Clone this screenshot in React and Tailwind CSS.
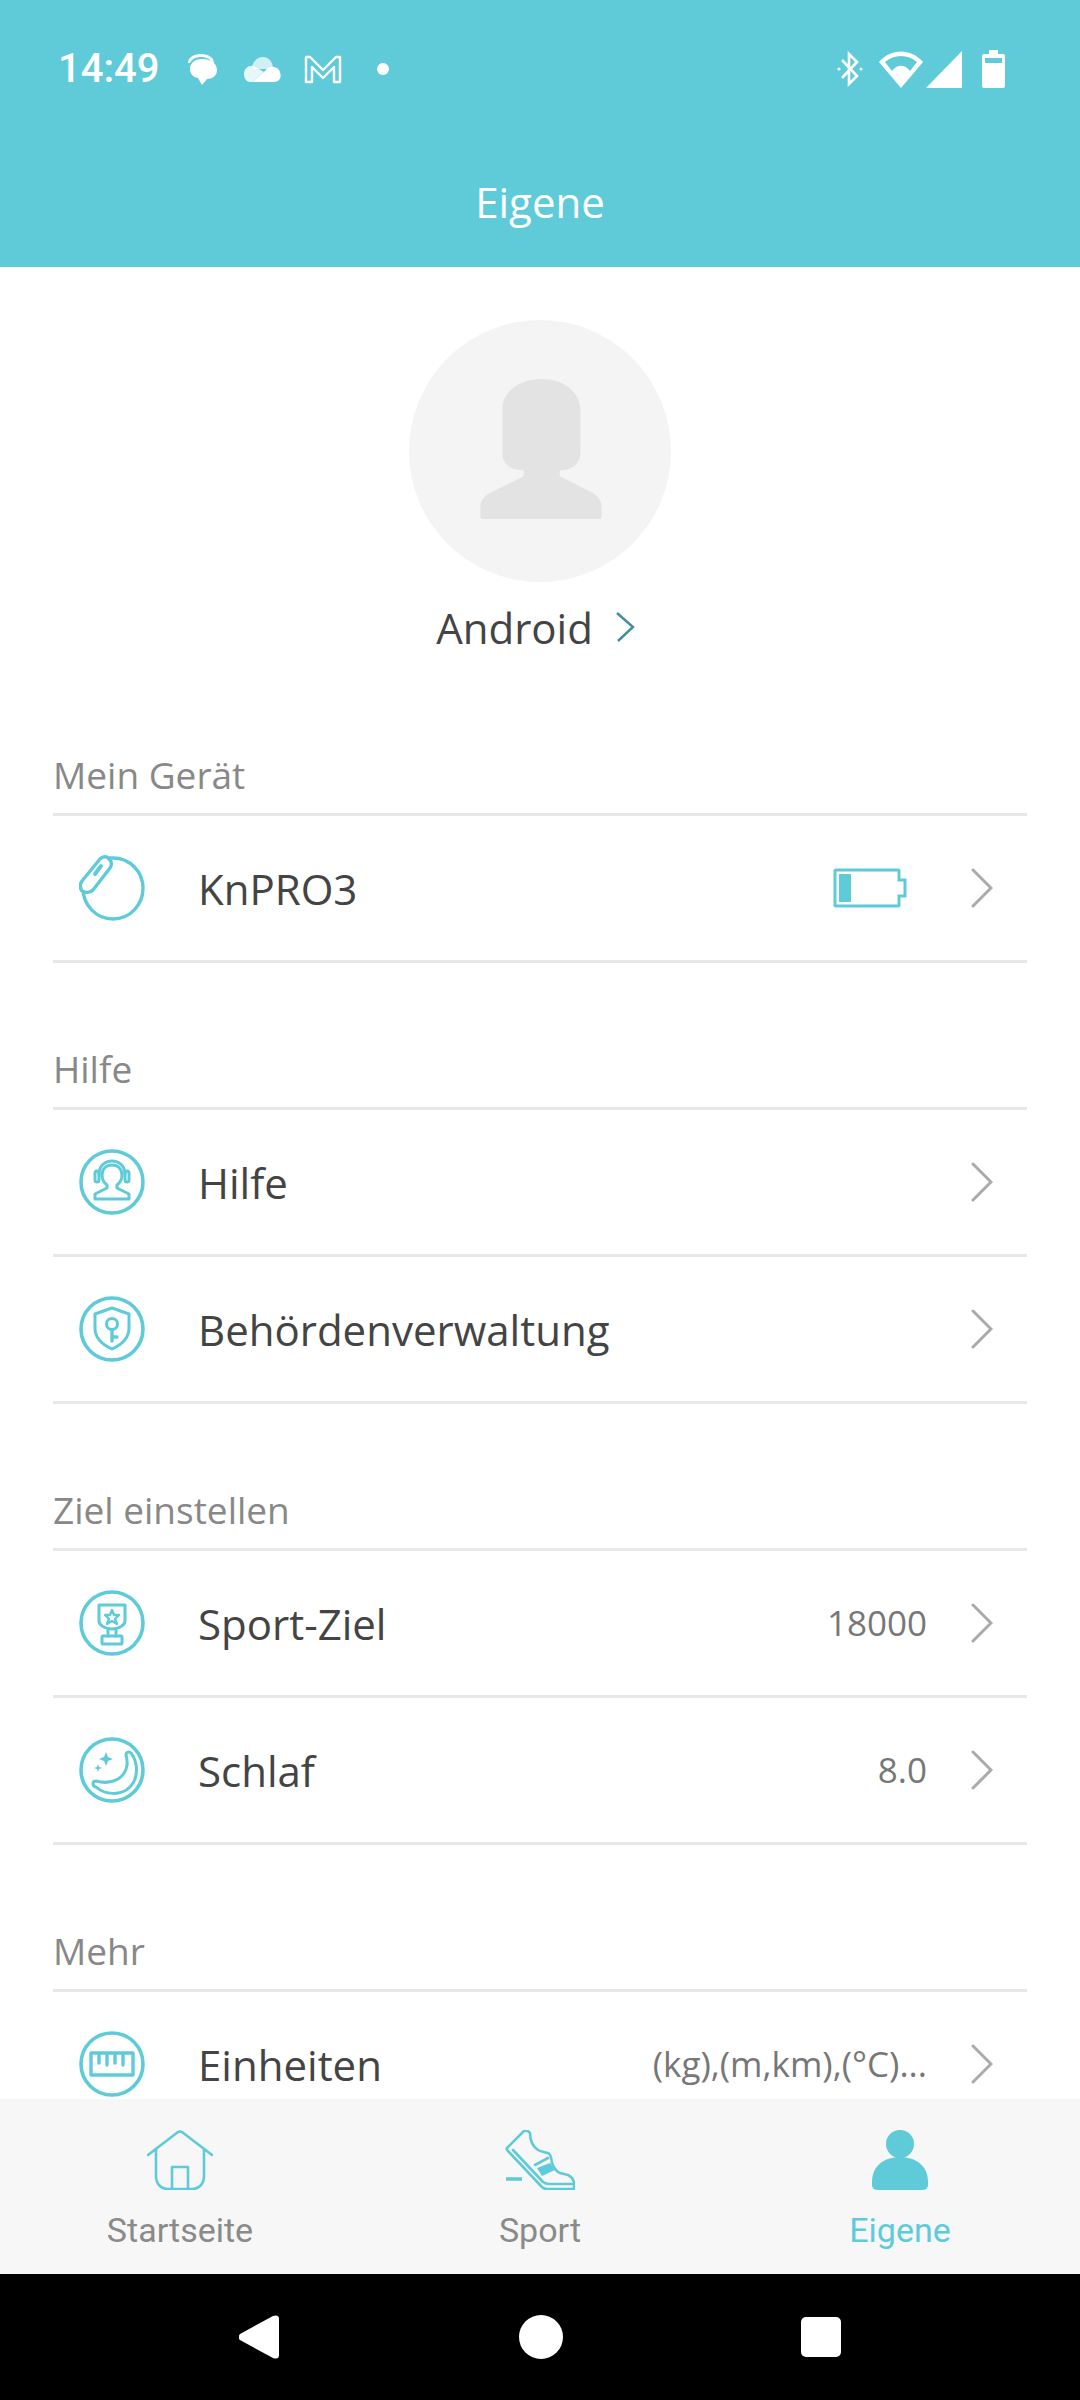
import React from "react";

const TEAL = "#5fcbd9";

const Chevron = () => (
    <svg width="22" height="40" viewBox="0 0 22 40" fill="none" className="shrink-0">
        <path d="M2 2 L20 20 L2 38" stroke="#aaaaaa" strokeWidth="3" strokeLinecap="round" strokeLinejoin="miter" />
    </svg>
);

// row icons, all drawn on a 66px box
const IconShell = ({ children }) => (
    <svg width="66" height="66" viewBox="0 0 66 66" fill="none" stroke={TEAL} strokeWidth="3" strokeLinejoin="round" strokeLinecap="round">
        {children}
    </svg>
);

const WatchIcon = () => (
    <IconShell>
        <path d="M4 33 C4 50 17 64 34 64 C51 64 64 50 64 33 C64 17 51 3 34 3 L29 3" strokeWidth="3.4" />
        <path d="M3 26 L21 4 C24 1 28 1 30 4 C33 6 33 10 31 13 L14 35 C11 38 6 38 3 36 C1 33 1 29 3 26 Z" fill="#ffffff" strokeWidth="3.4" />
        <path d="M16 19 L22 11" strokeWidth="4" />
    </IconShell>
);

const HeadsetIcon = () => (
    <IconShell>
        <circle cx="33" cy="33" r="31" strokeWidth="3.6" />
        <path d="M16 50 V45 L28 39 V36 C24 33 23 29 23 26 C23 20 27 16 33 16 C39 16 43 20 43 26 C43 29 42 33 38 36 V39 L50 45 V50 Z" />
        <path d="M20 25 C20 17 26 12 33 12 C40 12 46 17 46 25" />
        <rect x="16" y="22" width="4" height="11" rx="2" />
        <rect x="46" y="22" width="4" height="11" rx="2" />
    </IconShell>
);

const ShieldIcon = () => (
    <IconShell>
        <circle cx="33" cy="33" r="31" strokeWidth="3.6" />
        <path d="M33 12 L50 18 V32 C50 42 42 49 33 53 C24 49 16 42 16 32 V18 Z" />
        <circle cx="33" cy="28" r="5.5" />
        <path d="M33 34 V45 M33 41 H38" strokeWidth="3.4" />
    </IconShell>
);

const TrophyIcon = () => (
    <IconShell>
        <circle cx="33" cy="33" r="31" strokeWidth="3.6" />
        <path d="M20 15 H46 V31 C46 35 40 39 33 39 C26 39 20 35 20 31 Z" />
        <path d="M29 39 V46 M37 39 V46" />
        <rect x="23" y="46" width="20" height="8" rx="1" />
        <path d="M33 20 L35 25 L40 25 L36 29 L38 34 L33 31 L28 34 L30 29 L26 25 L31 25 Z" strokeWidth="2.4" />
    </IconShell>
);

const MoonIcon = () => (
    <IconShell>
        <circle cx="33" cy="33" r="31" strokeWidth="3.6" />
        <path d="M47 18 C50 28 47 37 39 42 C32 46 24 46 17 44 C13 44 13 49 17 50 C26 58 42 59 51 50 C60 41 59 25 52 16 C50 14 47 15 47 18 Z" />
        <path d="M27 15 L29 20 L34 22 L29 24 L27 29 L25 24 L20 22 L25 20 Z" fill={TEAL} stroke="none" />
        <path d="M19 27 L20 30 L23 31 L20 32 L19 35 L18 32 L15 31 L18 30 Z" fill={TEAL} stroke="none" />
    </IconShell>
);

const RulerIcon = () => (
    <IconShell>
        <circle cx="33" cy="33" r="31" strokeWidth="3.6" />
        <rect x="12" y="22" width="42" height="22" strokeWidth="3.4" />
        <path d="M20 24 V32 M28 24 V34 M36 24 V32 M44 24 V34" strokeWidth="3.4" />
    </IconShell>
);

const BatteryIcon = () => (
    <svg width="74" height="40" viewBox="0 0 74 40" fill="none">
        <path d="M2 3 Q2 2 3 2 H65 Q66 2 66 3 V12 H72 V28 H66 V37 Q66 38 65 38 H3 Q2 38 2 37 Z" stroke={TEAL} strokeWidth="3" />
        <rect x="6" y="6" width="12" height="28" fill={TEAL} />
    </svg>
);

const Row = ({ icon, label, value, extra }) => (
    <div className="h-[147px] flex items-center border-b-[3px] border-[#e8e8e8]">
        <div className="w-[145px] pl-[26px] shrink-0 flex items-center">{icon}</div>
        <span className="flex-1 text-[42px] text-[#444444]">{label}</span>
        {value && <span className="text-[35px] text-[#777777] mr-[44px]">{value}</span>}
        {extra && <span className="flex mr-[64px]">{extra}</span>}
        <span className="mr-[34px] flex"><Chevron /></span>
    </div>
);

const Section = ({ title, children }) => (
    <section className="mx-[53px]">
        <div className="h-[62px] flex items-center border-b-[3px] border-[#e8e8e8] text-[37px] text-[#888888] pb-[18px]">{title}</div>
        {children}
    </section>
);

const App = () => {
    return (
        <div className="w-[1080px] h-[2400px] flex flex-col bg-white overflow-hidden font-['Open_Sans',sans-serif]">
            {/* status bar + title */}
            <header className="h-[267px] shrink-0 bg-[#5fcbd9] text-white flex flex-col">
                <div className="h-[50px] mt-[44px] pl-[58px] pr-[75px] flex items-center">
                    <span className="text-[40px] font-medium font-['Roboto',sans-serif] w-[127px]">14:49</span>
                    <svg width="32" height="32" viewBox="0 0 32 32" fill="white" className="mr-[27px]">
                        <path d="M3 10 C3 5 8 1 16 1 C24 1 29 5 29 10 L27 10 C25 6 21 4 16 4 C11 4 7 6 5 10 Z" />
                        <path d="M5 16 C5 10 10 6 17 6 C25 6 32 10 32 17 C32 23 27 26 22 26 L17 32 L13 25 C8 24 5 21 5 16 Z" />
                    </svg>
                    <svg width="37" height="25" viewBox="0 0 37 25" fill="white" className="mr-[23px]">
                        <path opacity="0.7" d="M8 12 C8 5 13 0 19 0 C25 0 29 5 29 12 Z" />
                        <path opacity="0.85" d="M0 17 C0 11 5 8 10 9 L20 15 L9 25 L6 25 C2 25 0 21 0 17 Z" />
                        <path d="M9 25 L21 14 C24 9 31 8 35 13 C38 18 37 25 30 25 Z" />
                    </svg>
                    <svg width="38" height="29" viewBox="0 0 38 29" fill="none" stroke="white" strokeWidth="2.4" strokeLinejoin="round" className="mr-[35px]">
                        <path d="M2 2 H6 L19 15 L32 2 H36 V27 H30 V12 L19 23 L8 12 V27 H2 Z" />
                    </svg>
                    <span className="w-[12px] h-[12px] rounded-full bg-white"></span>
                    <span className="flex-1"></span>
                    <svg width="28" height="36" viewBox="0 0 28 36" fill="none" stroke="white" strokeWidth="2.6" className="mr-[15px]">
                        <path d="M6 9 L21 25 L13 33 V3 L21 11 L6 27" />
                        <circle cx="3" cy="18" r="1.6" fill="white" stroke="none" />
                        <circle cx="25" cy="18" r="1.6" fill="white" stroke="none" />
                    </svg>
                    <svg width="44" height="37" viewBox="0 0 44 37" fill="white" className="mr-[3px]">
                        <path fillRule="evenodd" d="M0 11 C12 -3 32 -3 44 11 L22 37 Z M6 11 C15 3 29 3 38 11 L31 20 C26 13 18 13 13 20 Z" />
                    </svg>
                    <svg width="36" height="37" viewBox="0 0 36 37" fill="white" className="mr-[20px]">
                        <path d="M36 0 V37 H0 Z" />
                    </svg>
                    <svg width="23" height="38" viewBox="0 0 23 38" fill="white">
                        <path fillRule="evenodd" d="M7 0 H16 V4 H21 Q23 4 23 6 V36 Q23 38 21 38 H2 Q0 38 0 36 V6 Q0 4 2 4 H7 Z M3 8 V13 H20 V8 Z" />
                    </svg>
                </div>
                <div className="flex-1 flex items-center justify-center text-[42px] pt-[42px]">Eigene</div>
            </header>

            {/* scrolling content, cut by the tab bar */}
            <main className="flex-1 min-h-0 overflow-hidden">
                <div className="flex flex-col items-center pt-[53px]">
                    <div className="w-[262px] h-[262px] rounded-full bg-[#f4f4f4] flex items-center justify-center">
                        <svg width="122" height="140" viewBox="302 238 364 420" fill="#e3e3e3" className="mb-[4px] ml-[2px]">
                            <path d="M368 330 C368 275 420 238 485 238 C550 238 602 275 602 330 V460 C602 495 575 512 540 512 V530 L640 580 C655 590 666 605 666 620 V650 Q666 658 658 658 H310 Q302 658 302 650 V620 C302 605 312 590 330 580 L432 530 V512 C395 512 368 495 368 460 Z" />
                        </svg>
                    </div>
                    <div className="mt-[15px] mr-[9px] h-[60px] flex items-center gap-[22px]">
                        <span className="text-[42px] text-[#444444]">Android</span>
                        <svg width="20" height="32" viewBox="0 0 20 32" fill="none">
                            <path d="M2 2 L18 16 L3 30" stroke="#3f8f9b" strokeWidth="2.4" />
                        </svg>
                    </div>
                </div>

                <div className="mt-[97px] flex flex-col gap-[85px]">
                    <Section title="Mein Gerät">
                        <Row icon={<WatchIcon />} label="KnPRO3" extra={<BatteryIcon />} />
                    </Section>
                    <Section title="Hilfe">
                        <Row icon={<HeadsetIcon />} label="Hilfe" />
                        <Row icon={<ShieldIcon />} label="Behördenverwaltung" />
                    </Section>
                    <Section title="Ziel einstellen">
                        <Row icon={<TrophyIcon />} label="Sport-Ziel" value="18000" />
                        <Row icon={<MoonIcon />} label="Schlaf" value="8.0" />
                    </Section>
                    <Section title="Mehr">
                        <Row icon={<RulerIcon />} label="Einheiten" value="(kg),(m,km),(°C)..." />
                    </Section>
                </div>
            </main>

            {/* tab bar */}
            <nav className="h-[175px] shrink-0 bg-[#f7f7f7] grid grid-cols-3 font-['Roboto',sans-serif] text-[34px] text-[#8a8a8a]">
                <div className="flex flex-col items-center pt-[31px]">
                    <svg width="66" height="60" viewBox="0 0 66 60" fill="none" stroke={TEAL} strokeWidth="2.6" strokeLinecap="round" strokeLinejoin="round">
                        <path d="M1 25 L31 2 Q33 1 35 2 L65 25" />
                        <path d="M9 19 V46 C9 54 14 59 21 59 H45 C52 59 57 54 57 46 V19" />
                        <path d="M25 59 V37 H41 V59" />
                    </svg>
                    <span className="mt-[15px]">Startseite</span>
                </div>
                <div className="flex flex-col items-center pt-[31px]">
                    <svg width="70" height="60" viewBox="0 0 70 60" fill="none" stroke={TEAL} strokeWidth="2.6" strokeLinejoin="round" strokeLinecap="round">
                        <path d="M2 18 L19 1 Q23 0 25 3 C25 10 27 16 33 20 C36 22 40 22 43 23 Q46 24 47 33 C49 38 52 42 55 43 L63 45 Q69 48 69 54 V59 H42 Q38 59 36 56 L3 21 Q1 19 2 18 Z" />
                        <path d="M8 20 L38 52 Q41 54 44 54 H68" />
                        <path d="M30 35 L43 28" />
                        <path d="M32 38 L45 33 L50 40 L37 46 Z" fill={TEAL} stroke="none" />
                        <path d="M1 49 H17" strokeWidth="3.6" strokeLinecap="butt" />
                    </svg>
                    <span className="mt-[15px]">Sport</span>
                </div>
                <div className="flex flex-col items-center pt-[31px] text-[#5fcbd9]">
                    <svg width="56" height="60" viewBox="0 0 56 60" fill={TEAL}>
                        <ellipse cx="28" cy="14" rx="14" ry="14" />
                        <path d="M0 52 C0 36 12 27 28 27 C44 27 56 36 56 52 V55 Q56 60 50 60 H6 Q0 60 0 55 Z" />
                    </svg>
                    <span className="mt-[15px]">Eigene</span>
                </div>
            </nav>

            {/* android navigation */}
            <div className="h-[126px] shrink-0 bg-black flex items-center justify-center">
                <svg width="40" height="44" viewBox="0 0 40 44" fill="white" className="mr-[240px]">
                    <path d="M1 19 L34 1 Q40 -1 40 4 V40 Q40 45 34 43 L1 25 Q-2 22 1 19 Z" />
                </svg>
                <span className="w-[44px] h-[44px] rounded-full bg-white"></span>
                <span className="w-[40px] h-[40px] rounded-[5px] bg-white ml-[238px]"></span>
            </div>
        </div>
    );
};

export default App;
